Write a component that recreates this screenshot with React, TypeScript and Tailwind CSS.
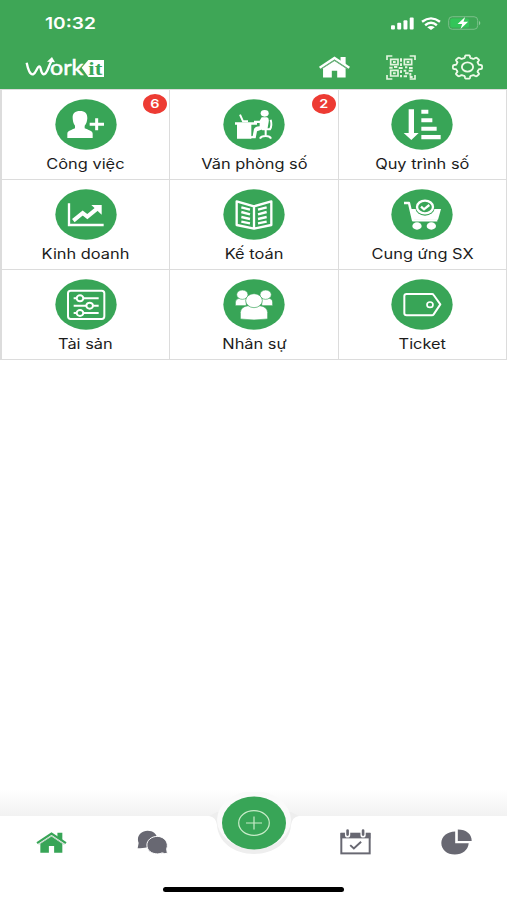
import type { ReactNode } from 'react';

interface MenuItem {
  label: string;
  badge?: number;
  labelClass: string;
  icon: ReactNode;
}

// eight-tooth gear outline, slightly wider than tall
const gearPath = (() => {
  const points: string[] = [];
  for (let i = 0; i < 240; i++) {
    const a = (i / 240) * Math.PI * 2;
    const wave = Math.tanh(Math.cos(a * 8) * 3.5);
    const r = 0.86 + wave * 0.1;
    points.push(`${(47 + Math.cos(a) * r * 46).toFixed(1)} ${(38 + Math.sin(a) * r * 37).toFixed(1)}`);
  }
  return `M${points.join('L')}Z`;
})();

const menuItems: MenuItem[] = [
  {
    label: 'Công việc',
    badge: 6,
    labelClass: 'scale-x-[1.17]',
    icon: (
      <>
        <path
          fill="#fff"
          d="M37 116V103C37 94 51 92 60 87V79C54 72 54 65 53 57C52 42 60 35 75 35C90 35 97 42 97 57C96 65 95 73 89 79V87C99 92 113 94 113 103V116Z"
        />
        <path d="M124 57V93M104 75H147" stroke="#38a557" strokeWidth="15" />
        <path d="M125 57V93M104 75H147" stroke="#fff" strokeWidth="9" />
      </>
    ),
  },
  {
    label: 'Văn phòng số',
    badge: 2,
    labelClass: 'scale-x-[1.17]',
    icon: (
      <g transform="translate(-2 0)">
        <path fill="#fff" d="M38 69H104V76H87V118H44V76H38Z" />
        <path d="M53 46L62 66H77" fill="none" stroke="#fff" strokeWidth="6" />
        <ellipse cx="127" cy="42" rx="12" ry="10" fill="#fff" />
        <path fill="#fff" d="M118 54H134Q141 56 139 68L135 91H117L104 96L100 117H84V111L91 110L95 89Q98 82 112 81V71H95V64H112Z" />
        <path d="M145 61Q150 78 143 90H119M130 90V110M113 118Q116 110 130 110Q143 110 146 118" fill="none" stroke="#fff" strokeWidth="6" />
      </g>
    ),
  },
  {
    label: 'Quy trình số',
    labelClass: 'scale-x-[1.17]',
    icon: (
      <path
        fill="#fff"
        d="M53 30H69V101H83L61 122L38 101H53ZM91 31H112V43H91ZM91 57H124V69H91ZM91 82H137V94H91ZM91 107H149V120H91Z"
      />
    ),
  },
  {
    label: 'Kinh doanh',
    labelClass: 'scale-x-[1.17]',
    icon: (
      <>
        <path d="M42 42V107H146" fill="none" stroke="#fff" strokeWidth="7" />
        <path d="M55 94L83 71L97 82L131 54" fill="none" stroke="#fff" strokeWidth="12" />
        <path d="M109 47H140V76Z" fill="#fff" />
      </>
    ),
  },
  {
    label: 'Kế toán',
    labelClass: 'scale-x-[1.17]',
    icon: (
      <path
        d="M41 36V107L93 118L145 107V36L93 51ZM93 51V118M55 54L81 61M55 68L81 75M55 83L81 89M55 97L81 102M131 54L105 61M131 68L105 75M131 83L105 89M131 97L105 102"
        fill="none"
        stroke="#fff"
        strokeWidth="7"
        strokeLinejoin="round"
      />
    ),
  },
  {
    label: 'Cung ứng SX',
    labelClass: 'scale-x-[1.17]',
    icon: (
      <>
        <path d="M39 41H54L66 93H139" fill="none" stroke="#fff" strokeWidth="7" strokeLinejoin="round" />
        <path d="M57 59H150L141 91H66Z" fill="#fff" />
        <ellipse cx="102" cy="55" rx="29" ry="24" fill="#38a557" />
        <ellipse cx="102" cy="53" rx="24" ry="19" fill="none" stroke="#fff" strokeWidth="7" />
        <path d="M90 52L99 60L115 47" fill="none" stroke="#fff" strokeWidth="7" />
        <ellipse cx="78" cy="110" rx="14" ry="11" fill="#fff" />
        <ellipse cx="121" cy="110" rx="14" ry="11" fill="#fff" />
      </>
    ),
  },
  {
    label: 'Tài sản',
    labelClass: 'scale-x-[1.17]',
    icon: (
      <g fill="none" stroke="#fff" strokeWidth="6">
        <rect x="39" y="34" width="109" height="85" rx="8" />
        <path d="M56 57H64M85 57H131M56 79H93M115 79H131M56 101H64M85 101H131" />
        <ellipse cx="75" cy="57" rx="10" ry="9" />
        <ellipse cx="104" cy="79" rx="10" ry="9" />
        <ellipse cx="75" cy="101" rx="10" ry="9" />
      </g>
    ),
  },
  {
    label: 'Nhân sự',
    labelClass: 'scale-x-[1.17]',
    icon: (
      <g fill="#fff" stroke="#38a557" strokeWidth="2">
        <path d="M37 79V68Q38 58 51 56H70V79ZM149 79V68Q148 58 135 56H116V79Z" />
        <ellipse cx="58" cy="46" rx="17" ry="14" />
        <ellipse cx="128" cy="46" rx="17" ry="14" />
        <path d="M52 119V99Q54 81 76 79H110Q132 81 134 99V119Q93 125 52 119Z" />
        <ellipse cx="93" cy="64" rx="25" ry="21" />
      </g>
    ),
  },
  {
    label: 'Ticket',
    labelClass: 'scale-x-[1.17]',
    icon: (
      <g fill="none" stroke="#fff" strokeLinejoin="round">
        <path d="M47 44H123Q126 44 128 47L148 75L128 105Q126 108 123 108H47Q40 108 40 102V50Q40 44 47 44Z" strokeWidth="6" />
        <ellipse cx="117" cy="76" rx="9" ry="8" strokeWidth="5" />
      </g>
    ),
  },
];

function HouseIcon({ className }: { className: string }) {
  return (
    <svg viewBox="0 0 92 64" className={className}>
      <path fill="currentColor" d="M12 36L46 14L79 36V63H54V43H38V63H12Z" />
      <path fill="currentColor" d="M64 2H79V27L64 17Z" />
      <path d="M2 34L46 5L90 34" fill="none" stroke="currentColor" strokeWidth="7" />
      <path d="M7 38L46 12L85 38" fill="none" stroke="#8fb398" strokeWidth="2" />
    </svg>
  );
}

function Logo() {
  return (
    <svg viewBox="0 0 240 72" className="mt-[2px] h-[24px] w-[80px]">
      <path
        d="M5 20C9 40 15 57 24 55C34 51 36 31 43 31C49 31 46 53 56 55C68 54 69 31 79 16"
        fill="none"
        stroke="#fff"
        strokeWidth="7"
      />
      <path d="M66 17L81 3L90 19Z" fill="#fff" />
      <text
        x="75"
        y="58"
        textLength="100"
        lengthAdjust="spacingAndGlyphs"
        fill="#fff"
        stroke="#fff"
        strokeWidth="1.500"
        fontFamily="Lato, sans-serif"
        fontSize="61"
      >
        ork
      </text>
      <path d="M170 35L190 12H237V63H190Z" fill="#fff" />
      <text
        x="190"
        y="57"
        textLength="42"
        lengthAdjust="spacingAndGlyphs"
        fill="#38a557"
        fontFamily="'Liberation Serif', serif"
        fontWeight="700"
        fontSize="58"
      >
        it
      </text>
    </svg>
  );
}

function QrIcon() {
  return (
    <svg viewBox="0 0 90 75" className="h-[25px] w-[30px]" fill="none" stroke="#e4f5df">
      <path d="M3 15V3H19M71 3H87V15M87 60V72H71M19 72H3V60" strokeWidth="5" />
      <path d="M14 13H36V29H14ZM55 13H77V29H55ZM14 46H36V63H14Z" strokeWidth="5" />
      <path d="M21 21H29M62 21H70M21 55H29" strokeWidth="6" />
      <path
        d="M45 10V20M45 25V33M10 38H20M24 36H34M38 39H50M57 37H64M69 39H80M45 46V54M45 60V67M53 47H61M68 47H80M57 55H68M73 54V62M53 64H63M71 66H80"
        strokeWidth="6"
      />
    </svg>
  );
}

function GearIcon() {
  return (
    <svg viewBox="0 0 94 76" className="h-[26px] w-[31px]" fill="none" stroke="#effbe9" strokeWidth="5.500">
      <path d={gearPath} strokeLinejoin="round" />
      <ellipse cx="47" cy="38" rx="17" ry="14" />
    </svg>
  );
}

function StatusBar() {
  return (
    <div className="flex h-[46px] items-center justify-between pl-[45px] pr-[26px] text-white">
      <span className="origin-left scale-x-[1.16] text-[16.5px] font-semibold leading-none">10:32</span>
      <div className="flex items-center gap-[7px]">
        <svg viewBox="0 0 70 38" className="h-[13px] w-[23px]" fill="#fff">
          <rect x="0" y="24" width="12" height="13" rx="3" />
          <rect x="19" y="17" width="12" height="20" rx="3" />
          <rect x="38" y="9" width="12" height="28" rx="3" />
          <rect x="57" y="1" width="12" height="36" rx="3" />
        </svg>
        <svg viewBox="0 0 58 38" className="h-[13px] w-[20px]" fill="none" stroke="#fff" strokeWidth="7" preserveAspectRatio="none">
          <path d="M3 14Q29 -6 55 14M12 24Q29 10 46 24" />
          <path d="M18 30Q29 22 40 30L29 38Z" fill="#fff" stroke="none" />
        </svg>
        <svg viewBox="0 0 100 42" className="h-[14px] w-[33px]">
          <rect x="2" y="2" width="88" height="38" rx="11" fill="none" stroke="#7cc08c" strokeWidth="3" />
          <rect x="7" y="7" width="57" height="28" rx="6" fill="#33c559" />
          <path d="M94 14Q102 21 94 28Z" fill="#8fca9c" />
          <path d="M52 3L29 24H43L38 39L61 17H47Z" fill="#fff" />
        </svg>
      </div>
    </div>
  );
}

function MenuCell({ item }: { item: MenuItem }) {
  return (
    <div className="relative flex h-full flex-col items-center border-b border-r border-[#dcdcdc] bg-white pt-[9px]">
      <svg viewBox="0 0 186 151" className="h-[51px] w-[62px]">
        <ellipse cx="93" cy="75.500" rx="92" ry="75.500" fill="#38a557" />
        {item.icon}
      </svg>
      <span className={`mt-[5px] whitespace-nowrap text-[14px] leading-[18px] text-[#1c1c1c] ${item.labelClass}`}>{item.label}</span>
      {item.badge && (
        <span className="absolute right-[2px] top-[4px] flex h-[20px] w-[24px] items-center justify-center rounded-[50%] bg-[#ed3b33] text-[12px] font-semibold leading-none text-white">
          <span className="scale-x-[1.2]">{item.badge}</span>
        </span>
      )}
    </div>
  );
}

function BottomNav() {
  return (
    <nav className="relative h-[84px] bg-white">
      <div className="grid h-[52px] grid-cols-5 items-center justify-items-center pl-px text-[#686872]">
        <HouseIcon className="h-[21px] w-[31px] text-[#38a557]" />
        <svg viewBox="0 0 94 73" className="h-[25px] w-[31px]" fill="currentColor">
          <path d="M2 54L5 38C-3 18 12 1 32 1C49 1 61 11 61 25C61 42 50 52 31 51C22 54 12 54 2 54Z" />
          <path
            d="M92 70L90 56C98 36 82 18 62 18C43 18 30 30 30 44C30 60 43 71 62 71C68 71 72 70 76 68Q84 71 92 70Z"
            stroke="#fff"
            strokeWidth="3"
          />
        </svg>
        <span />
        <svg viewBox="0 0 94 77" className="h-[26px] w-[31px]" fill="none" stroke="currentColor">
          <rect x="4" y="14" width="86" height="59" strokeWidth="6" />
          <path d="M2 19H92" strokeWidth="17" />
          <path d="M23 3V17M70 3V17" stroke="#fff" strokeWidth="16" strokeLinecap="round" />
          <path d="M23 4V16M70 4V16" strokeWidth="8" strokeLinecap="round" />
          <path d="M31 48L42 58L64 38" strokeWidth="6" />
        </svg>
        <svg viewBox="0 0 94 78" className="h-[26px] w-[31px]" fill="currentColor">
          <path d="M43 7V43H84C82 64 65 77 42 77C18 77 1 62 1 42C1 22 19 7 43 7Z" />
          <path d="M51 1C77 1 93 15 93 36H51Z" />
        </svg>
      </div>
      <svg viewBox="0 0 90 64" className="absolute left-[209px] top-[-24px] h-[64px] w-[90px]">
        <path d="M0 24Q7 25 8 33C9 50 25 62 45 62C65 62 81 50 82 33Q83 25 90 24L82 20H8Z" fill="#eeeeee" />
        <ellipse cx="45" cy="28" rx="37" ry="29" fill="#fafafa" />
        <ellipse cx="45" cy="31" rx="32" ry="26.500" fill="#38a557" />
        <ellipse cx="45" cy="31" rx="15.300" ry="12.300" fill="none" stroke="#c9ecc9" strokeWidth="1.200" />
        <path d="M45 24.500V37.500M37 31H53" stroke="#c9ecc9" strokeWidth="1.200" />
      </svg>
      <div className="mx-auto mt-[19px] h-[5px] w-[181px] rounded-full bg-black" />
    </nav>
  );
}

export default function App() {
  return (
    <div className="flex h-[900px] w-[507px] flex-col overflow-hidden bg-white font-[Inter,'Noto_Sans',sans-serif]">
      <header className="h-[89px] bg-[#3ea656]">
        <StatusBar />
        <div className="flex h-[42px] items-center justify-between pl-[25px] pr-[24px]">
          <Logo />
          <div className="flex items-center gap-[36px]">
            <HouseIcon className="h-[22px] w-[31px] text-white" />
            <QrIcon />
            <GearIcon />
          </div>
        </div>
      </header>

      <main className="flex flex-1 flex-col justify-between">
        <div className="grid h-[271px] grid-cols-3 grid-rows-3 border-l-2 border-t border-[#dcdcdc]">
          {menuItems.map((item) => (
            <MenuCell key={item.label} item={item} />
          ))}
        </div>
        <div className="h-[26px] bg-linear-to-b from-white to-[#f2f2f2]" />
      </main>

      <BottomNav />
    </div>
  );
}
